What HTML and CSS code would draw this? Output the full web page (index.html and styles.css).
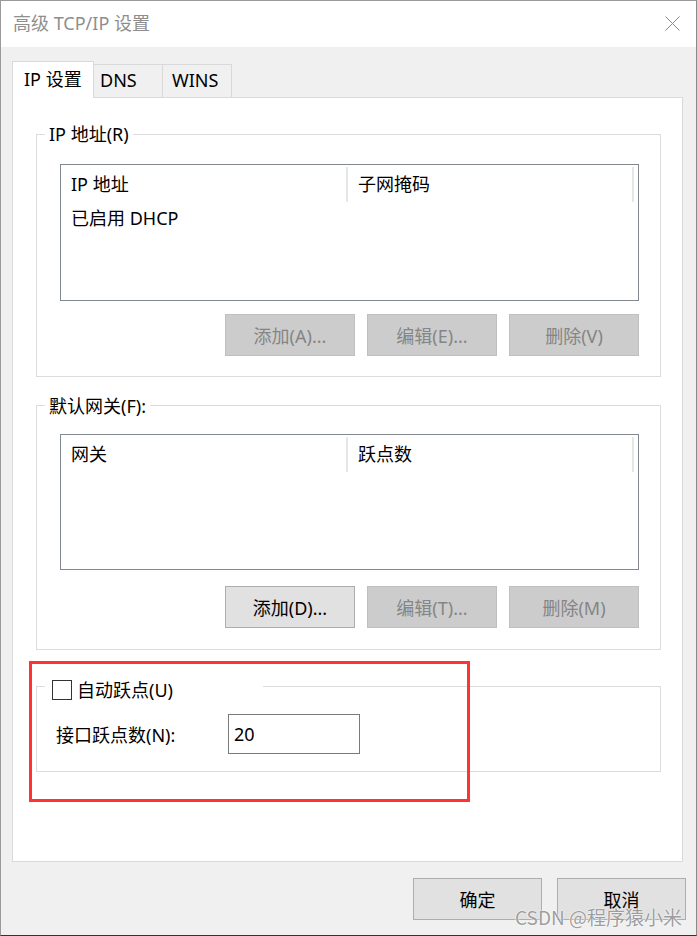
FILE: index.html
```html
<!DOCTYPE html>
<html lang="zh-CN">
<head>
<meta charset="utf-8">
<title>高级 TCP/IP 设置</title>
<link rel="stylesheet" href="styles.css">
</head>
<body>
<div class="window">
  <div class="titlebar">
    <span class="title">高级 TCP/IP 设置</span>
    <svg class="close" width="15" height="15" viewBox="0 0 15 15"><path d="M0.5 0.5 L14.5 14.5 M14.5 0.5 L0.5 14.5" stroke="#8a8a8a" stroke-width="1" fill="none"/></svg>
  </div>
  <div class="body">
    <div class="tabs">
      <div class="tab tab-active">IP 设置</div>
      <div class="tab tab-dns">DNS</div>
      <div class="tab tab-wins">WINS</div>
    </div>
    <div class="panel">
      <div class="group group-ip">
        <div class="legend">IP 地址(R)</div>
        <div class="list list-ip">
          <div class="list-head">
            <div class="col col1">IP 地址</div>
            <div class="divider"></div>
            <div class="col col2">子网掩码</div>
            <div class="divider"></div>
          </div>
          <div class="list-row">已启用 DHCP</div>
        </div>
        <div class="btn-row">
          <div class="btn disabled">添加(A)...</div>
          <div class="btn disabled">编辑(E)...</div>
          <div class="btn disabled">删除(V)</div>
        </div>
      </div>
      <div class="group group-gw">
        <div class="legend">默认网关(F):</div>
        <div class="list list-gw">
          <div class="list-head">
            <div class="col col1">网关</div>
            <div class="divider"></div>
            <div class="col col2">跃点数</div>
            <div class="divider"></div>
          </div>
        </div>
        <div class="btn-row">
          <div class="btn">添加(D)...</div>
          <div class="btn disabled">编辑(T)...</div>
          <div class="btn disabled">删除(M)</div>
        </div>
      </div>
      <div class="group group-metric">
        <div class="legend legend-check">
          <span class="checkbox"></span>
          <span>自动跃点(U)</span>
        </div>
        <div class="metric-row">
          <span class="metric-label">接口跃点数(N):</span>
          <div class="input">20</div>
        </div>
      </div>
    </div>
    <div class="footer">
      <div class="btn footer-btn">确定</div>
      <div class="btn footer-btn">取消</div>
    </div>
  </div>
  <div class="highlight"></div>
  <div class="watermark">CSDN @程序猿小米</div>
</div>
</body>
</html>
```
FILE: styles.css
```css
* { box-sizing: border-box; }
html, body { margin: 0; padding: 0; background: #ffffff; }
body {
  font-family: "Noto Sans", "Noto Sans CJK SC", sans-serif;
  font-size: 18px;
  color: #000;
}
.window {
  position: relative;
  width: 697px;
  height: 936px;
  border: 1px solid #9a9a9a;
  border-bottom-color: #333;
  border-right-color: #8a8a8a;
  background: #f0f0f0;
  display: flex;
  flex-direction: column;
}
.titlebar {
  height: 46px;
  background: #fff;
  display: flex;
  align-items: center;
  justify-content: space-between;
  padding: 0 16px 0 12px;
  flex: none;
}
.title {
  color: #8e8e8e;
  font-size: 18px;
  line-height: 24px;
  margin-top: -2px;
}
.close { display: block; margin-top: -1px; }
.body {
  flex: 1;
  padding: 14px 13px 0 11px;
  display: flex;
  flex-direction: column;
}
.tabs {
  display: flex;
  align-items: flex-end;
  height: 37px;
  margin-bottom: -1px;
  position: relative;
  z-index: 1;
}
.tab {
  height: 33px;
  margin-bottom: 1px;
  border: 1px solid #d9d9d9;
  border-bottom: none;
  border-left: none;
  background: #f0f0f0;
  line-height: 31px;
  font-size: 18px;
}
.tab-active {
  height: 37px;
  margin-bottom: 0;
  width: 82px;
  border-left: 1px solid #d9d9d9;
  background: #fff;
  padding-left: 11px;
  line-height: 34px;
}
.tab-dns { width: 69px; padding-left: 6px; }
.tab-wins { width: 69px; padding-left: 9px; }
.panel {
  height: 765px;
  background: #fff;
  border: 1px solid #d9d9d9;
  padding: 36px 21px 0 23px;
  flex: none;
}
.group {
  border: 1px solid #dcdcdc;
  padding: 0 21px 0 23px;
}
.legend {
  display: block;
  width: fit-content;
  margin: -11px 0 0 -15px;
  padding: 0 4px;
  height: 20px;
  line-height: 20px;
  background: #fff;
  font-size: 18px;
}
.group-ip { padding-bottom: 20px; }
.group-ip .list { margin-top: 20px; height: 137px; }
.group-gw { margin-top: 28px; padding-bottom: 21px; }
.group-gw .legend { margin-top: -10px; }
.group-gw .list { margin-top: 18px; height: 136px; }
.list {
  border: 1px solid #828790;
  background: #fff;
}
.list-head {
  display: flex;
  height: 38px;
}
.col {
  line-height: 38px;
  padding-left: 10px;
}
.col1 { width: 285px; }
.col2 { width: 284px; }
.divider {
  width: 2px;
  height: 35px;
  margin-top: 2px;
  background: #e6e6e6;
}
.list-row {
  height: 30px;
  line-height: 30px;
  padding-left: 10px;
}
.btn-row {
  display: flex;
  justify-content: flex-end;
  gap: 12px;
  margin-top: 13px;
}
.group-gw .btn-row { margin-top: 16px; }
.btn {
  width: 130px;
  height: 42px;
  border: 1px solid #adadad;
  background: #e1e1e1;
  display: flex;
  align-items: center;
  justify-content: center;
  font-size: 18px;
  color: #000;
}
.btn.disabled {
  background: #cccccc;
  border-color: #bfbfbf;
  color: #858585;
}
.group-metric {
  margin-top: 36px;
  padding: 0 21px 17px 19px;
}
.legend-check {
  margin: -7px 0 0 -11px;
  width: 218px;
  padding: 0 0 0 7px;
  display: flex;
  align-items: center;
  gap: 5px;
}
.checkbox {
  display: block;
  width: 20px;
  height: 20px;
  border: 1px solid #333;
  background: #fff;
  flex: none;
}
.metric-row {
  display: flex;
  align-items: center;
  margin-top: 14px;
  height: 40px;
}
.metric-label { width: 172px; }
.input {
  width: 132px;
  height: 40px;
  border: 1px solid #7a7a7a;
  line-height: 38px;
  padding-left: 5px;
  background: #fff;
}
.footer {
  display: flex;
  justify-content: flex-end;
  gap: 15px;
  margin-top: 16px;
  margin-right: -3px;
}
.footer-btn { width: 129px; }
.highlight {
  position: absolute;
  left: 28px;
  top: 660px;
  width: 441px;
  height: 141px;
  border: 3px solid #ff3333;
  pointer-events: none;
}
.watermark {
  position: absolute;
  right: 14px;
  bottom: 6px;
  font-family: "Noto Sans CJK SC", sans-serif;
  font-size: 19px;
  line-height: 24px;
  color: rgba(140, 140, 140, 0.85);
  text-shadow: 0 0 2px #fff, 0 0 1px #fff;
}
```
